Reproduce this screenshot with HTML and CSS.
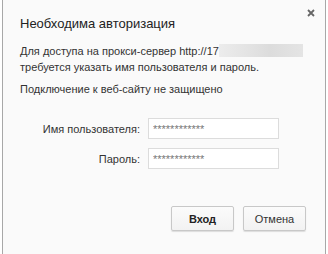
FILE: index.html
```html
<!DOCTYPE html>
<html lang="ru">
<head>
  <meta charset="UTF-8">
  <title>Необходима авторизация</title>
  <link rel="stylesheet" href="styles.css">
</head>
<body>
  <div class="dialog">
    <div class="dialog-header">
      <h1 class="dialog-title">Необходима авторизация</h1>
      <svg class="close-icon" width="8" height="8" viewBox="0 0 8 8">
        <path d="M1 1 L7 7 M7 1 L1 7" stroke="#666" stroke-width="1.8"/>
      </svg>
    </div>
    <p class="message"><span class="nowrap">Для доступа на прокси-сервер http://17<span class="blurred"></span></span><br>требуется указать имя пользователя и пароль.</p>
    <p class="message message-note">Подключение к веб-сайту не защищено</p>
    <div class="form">
      <label class="form-label" for="user">Имя пользователя:</label>
      <input id="user" class="form-input" type="text" value="************">
      <label class="form-label" for="pass">Пароль:</label>
      <input id="pass" class="form-input" type="text" value="************">
    </div>
    <div class="buttons">
      <button class="btn btn-default">Вход</button>
      <button class="btn">Отмена</button>
    </div>
  </div>
</body>
</html>
```

FILE: styles.css
```css
body {
  margin: 0;
  padding: 0;
  background-color: #fff;
  font-family: "Liberation Sans", Arial, sans-serif;
  color: #333;
}
.dialog {
  margin: 0 2px;
  height: 254px;
  box-sizing: border-box;
  background-color: #fafafa;
  border-left: 1px solid #a8a8a8;
  border-right: 1px solid #a8a8a8;
  padding: 0 19px 0 17px;
}
.dialog-header {
  display: flex;
  justify-content: space-between;
  align-items: flex-start;
  padding-top: 9px;
}
.dialog-title {
  margin: 6px 0 0 0;
  font-size: 13px;
  font-weight: normal;
  line-height: 18px;
  color: #222;
}
.close-icon {
  margin-right: -9px;
}
.message {
  margin: 10px 0 0 0;
  font-size: 11px;
  line-height: 16px;
}
.message-note {
  margin-top: 6px;
}
.nowrap {
  white-space: nowrap;
}
.blurred {
  display: inline-block;
  width: 84px;
  height: 13px;
  vertical-align: -2px;
  background: linear-gradient(to right, #ececec, #e2e2e2 40%, #dcdcdc 60%, #e4e4e4);
}
.form {
  display: grid;
  grid-template-columns: 120px 131px;
  column-gap: 8px;
  row-gap: 9px;
  align-items: center;
  margin-top: 21px;
}
.form-label {
  text-align: right;
  font-size: 11px;
}
.form-input {
  height: 21px;
  box-sizing: border-box;
  border: 1px solid #dcdcdc;
  background: #fff;
  padding: 0 4px;
  font-family: "Liberation Sans", Arial, sans-serif;
  font-size: 11px;
  color: #777;
}
.buttons {
  display: flex;
  justify-content: flex-end;
  gap: 9px;
  margin-top: 37px;
}
.btn {
  width: 63px;
  height: 25px;
  border: 1px solid #c8c8c8;
  border-radius: 2px;
  background: linear-gradient(#fbfbfb, #f2f2f2);
  box-shadow: 0 1px 1px rgba(0, 0, 0, 0.12);
  font-family: "Liberation Sans", Arial, sans-serif;
  font-size: 11px;
  color: #333;
  padding: 0;
}
.btn-default {
  font-weight: bold;
  color: #222;
}
```
